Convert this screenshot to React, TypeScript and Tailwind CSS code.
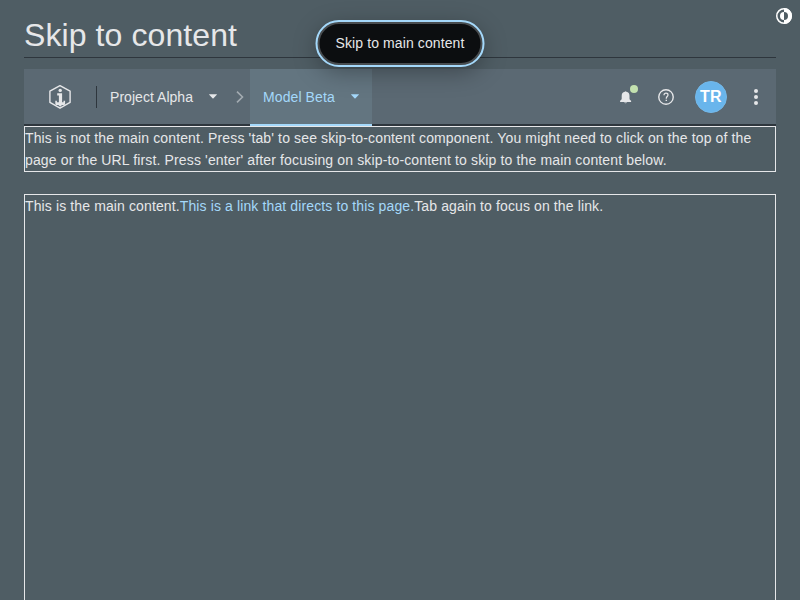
import React from "react";

function Caret({ className }: { className: string }) {
  return (
    <svg viewBox="0 0 8 5" className={`h-[5px] w-2 shrink-0 ${className}`} fill="currentColor">
      <path d="M0.2 0.3h7.6v0.5L4.5 4.3a.7.7 0 0 1-1 0L.2 .8z" />
    </svg>
  );
}

function Header() {
  return (
    <header className="flex h-[57px] items-stretch border-b-2 border-[#2e363d] bg-[#5b6973]">
      <div className="flex w-[72px] items-center justify-center pt-px">
        <svg viewBox="0 0 24 26" className="h-[26px] w-6" fill="none" stroke="#e6e7e9">
          <path d="M12 1.7 22.1 7.2v11.2L12 24.2 1.9 18.4V7.2z" strokeWidth="1.4" strokeLinejoin="round" />
          <circle cx="12.2" cy="6.4" r="1.7" fill="#e6e7e9" stroke="none" />
          <path d="M9.2 9.3h4.9v9h1.4v-1.5h1.600v2.700c0 1-.7 1.600-1.600 1.600h-1.500L12.200 22.700l-1.800-1.600H8.900c-.9 0-1.600-.6-1.600-1.600v-2.700h1.600v1.500h2v-6.800H9.200z" fill="#e6e7e9" stroke="none" />
        </svg>
      </div>
      <div className="mt-[17px] h-[22px] w-px bg-[#2e363d]" />
      <div className="flex w-[132px] items-center pl-[13px]">
        <span className="w-[99px] whitespace-nowrap tracking-[0.04px] text-[#e6e7e9]">Project Alpha</span>
        <Caret className="text-[#e6e7e9]" />
      </div>
      <div className="flex w-[21px] items-center pl-[7px]">
        <svg viewBox="0 0 8 12" className="h-3 w-2" fill="none" stroke="#a3abb1" strokeWidth="1.6">
          <path d="M1 .6 6.5 6 1 11.4" />
        </svg>
      </div>
      <div className="-mb-0.5 flex w-[122px] items-center border-b-2 border-[#a4d8fa] bg-[#637580] pl-[13px] text-[#a4d8fa]">
        <span className="w-[88px] whitespace-nowrap tracking-[0.1px]">Model Beta</span>
        <Caret className="text-[#a4d8fa]" />
      </div>
      <div className="ml-auto flex items-center pr-[17px]">
        <div className="relative mr-6 size-4">
          <svg viewBox="0 0 16 16" className="size-4" fill="#e6e7e9">
            <path d="M6.8 2.8a.9.9 0 0 1 1.6 0c2 .4 3.1 1.9 3.1 4v2.7c0 1.1.6 1.7 1.6 2.3V13H2.1v-1.2c1-.6 1.6-1.2 1.6-2.3V6.8c0-2.1 1.1-3.6 3.1-4zM6 13.5h3.2c-.2.5-.8.8-1.6.8s-1.4-.3-1.6-.8z" />
          </svg>
          <span className="absolute left-3 -top-1 size-2 rounded-full bg-[#c3e1af]" />
        </div>
        <svg viewBox="0 0 16 16" className="mr-[21px] size-4" fill="none" stroke="#e6e7e9">
          <circle cx="8" cy="8" r="7.25" strokeWidth="1.4" />
          <path d="M6 6.2c0-1.2.8-2 2-2s2 .7 2 1.8c0 1.5-1.7 1.6-1.7 3.2v.5" strokeWidth="1.2" />
          <path d="M7.6 10.7h1.4v1.4H7.6z" fill="#e6e7e9" stroke="none" />
        </svg>
        <div className="mr-[26px] flex size-8 items-center justify-center rounded-full border border-[#74b9ea] bg-[#69b5ec] text-[16px] font-bold tracking-[0.4px] text-white">
          TR
        </div>
        <svg viewBox="0 0 6 16" className="h-4 w-1.5" fill="#e6e7e9">
          <circle cx="3" cy="2" r="2" />
          <circle cx="3" cy="8" r="2" />
          <circle cx="3" cy="14" r="2" />
        </svg>
      </div>
    </header>
  );
}

export default function App() {
  return (
    <div className="relative h-[600px] overflow-hidden bg-[#4f5d64] px-6 font-['Liberation_Sans',Arial,sans-serif] text-[14px] leading-[22px] text-[#e6e7e9]">
      <h1 className="h-[58px] border-b border-[#2e363d] pt-[15px] text-[32px] leading-10 tracking-[0.09px]">Skip to content</h1>
      <div className="mt-[11px]">
        <Header />
      </div>
      <div className="border border-[#e6e7e9] tracking-[0.137px]">
        This is not the main content. Press 'tab' to see skip-to-content component. You might need to click on the top of the page or the URL first. Press 'enter' after focusing on skip-to-content to skip to the main content below.
      </div>
      <main className="mt-[22px] h-[800px] border border-[#e6e7e9] tracking-[0.12px]">
        This is the main content.<a className="text-[#a4d8fa]">This is a link that directs to this page.</a>Tab again to focus on the link.
      </main>
      <a className="absolute left-1/2 top-[22px] flex h-[43px] w-[165px] -translate-x-1/2 items-center justify-center whitespace-nowrap rounded-full border-2 border-[#484c4f] bg-[#0c0e10] pb-px tracking-[0.1px] shadow-[0_6px_24px_rgba(0,0,0,0.35)] outline-2 outline-[#a4d8fa]">
        Skip to main content
      </a>
      <svg viewBox="0 0 16 16" className="absolute left-[776px] top-2 size-4">
        <circle cx="8" cy="8" r="7.25" fill="none" stroke="white" strokeWidth="1.5" />
        <path d="M8 0a8 8 0 0 1 0 16v-4a4 4 0 0 0 0-8z" fill="white" />
        <path d="M8 4a4 4 0 0 0 0 8z" fill="white" />
      </svg>
    </div>
  );
}
